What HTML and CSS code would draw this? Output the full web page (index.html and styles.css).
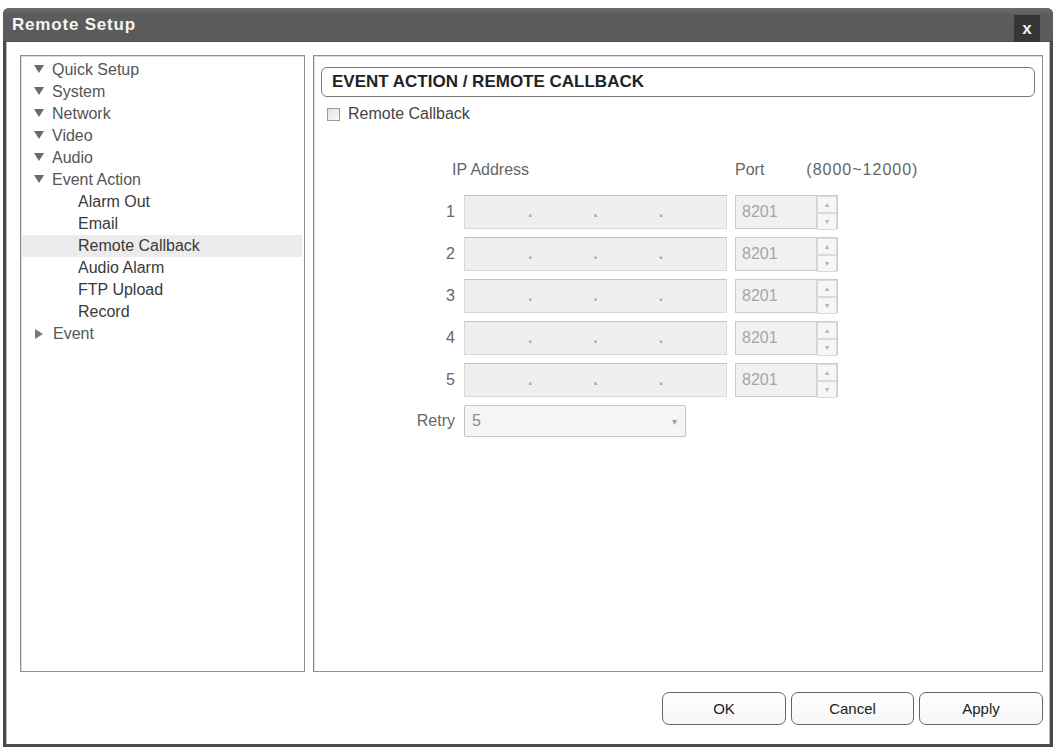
FILE: index.html
```html
<!DOCTYPE html>
<html lang="en">
<head>
    <meta charset="UTF-8">
    <title>Remote Setup</title>
    <link rel="stylesheet" href="styles.css">
</head>
<body>
    <div class="dialog">
        <div class="titlebar">
            <span class="title">Remote Setup</span>
            <button class="close-btn">x</button>
        </div>

        <div class="dialog-body">
            <div class="panels">
                <ul class="tree">
                    <li class="node open">Quick Setup</li>
                    <li class="node open">System</li>
                    <li class="node open">Network</li>
                    <li class="node open">Video</li>
                    <li class="node open">Audio</li>
                    <li class="node open">Event Action</li>
                    <li class="leaf">Alarm Out</li>
                    <li class="leaf">Email</li>
                    <li class="leaf selected">Remote Callback</li>
                    <li class="leaf">Audio Alarm</li>
                    <li class="leaf">FTP Upload</li>
                    <li class="leaf">Record</li>
                    <li class="node closed">Event</li>
                </ul>

                <div class="content">
                    <div class="section-title">EVENT ACTION / REMOTE CALLBACK</div>

                    <label class="check-row">
                        <span class="check-box"></span>
                        Remote Callback
                    </label>

                    <div class="callback-grid">
                        <span></span>
                        <span class="col-head ip-head">IP Address</span>
                        <span class="col-head">Port<span class="range">(8000~12000)</span></span>

                        <span class="row-label">1</span>
                        <div class="ip-field"><span></span><i>.</i><span></span><i>.</i><span></span><i>.</i><span></span></div>
                        <div class="port-field"><span class="port-value">8201</span><span class="spinner"><b>&#9652;</b><b>&#9662;</b></span></div>

                        <span class="row-label">2</span>
                        <div class="ip-field"><span></span><i>.</i><span></span><i>.</i><span></span><i>.</i><span></span></div>
                        <div class="port-field"><span class="port-value">8201</span><span class="spinner"><b>&#9652;</b><b>&#9662;</b></span></div>

                        <span class="row-label">3</span>
                        <div class="ip-field"><span></span><i>.</i><span></span><i>.</i><span></span><i>.</i><span></span></div>
                        <div class="port-field"><span class="port-value">8201</span><span class="spinner"><b>&#9652;</b><b>&#9662;</b></span></div>

                        <span class="row-label">4</span>
                        <div class="ip-field"><span></span><i>.</i><span></span><i>.</i><span></span><i>.</i><span></span></div>
                        <div class="port-field"><span class="port-value">8201</span><span class="spinner"><b>&#9652;</b><b>&#9662;</b></span></div>

                        <span class="row-label">5</span>
                        <div class="ip-field"><span></span><i>.</i><span></span><i>.</i><span></span><i>.</i><span></span></div>
                        <div class="port-field"><span class="port-value">8201</span><span class="spinner"><b>&#9652;</b><b>&#9662;</b></span></div>

                        <span class="row-label">Retry</span>
                        <div class="select-box"><span>5</span><span class="caret">&#9662;</span></div>
                    </div>
                </div>
            </div>

            <div class="actions">
                <button class="dlg-btn">OK</button>
                <button class="dlg-btn">Cancel</button>
                <button class="dlg-btn">Apply</button>
            </div>
        </div>
    </div>
</body>
</html>
```

FILE: styles.css
```css
body {
    margin: 0;
    padding: 0;
    background-color: #fff;
    font-family: 'Liberation Sans', Arial, sans-serif;
    color: #444;
}

.dialog {
    margin: 8px 0 0 3px;
    width: 1050px;
    height: 739px;
    box-sizing: border-box;
    border: 3px solid #4a4a4a;
    border-top: none;
    border-radius: 6px 6px 0 0;
    display: flex;
    flex-direction: column;
    background-color: #fff;
}

.titlebar {
    height: 34px;
    flex: none;
    display: flex;
    align-items: center;
    justify-content: space-between;
    padding-left: 6px;
    margin: 0 -3px;
    padding-left: 9px;
    border-radius: 6px 6px 0 0;
    background: linear-gradient(#6c6c6c, #5c5c5c 20%, #5a5a5a);
    border-bottom: 1px solid #4a4a4a;
    box-sizing: border-box;
}

.title {
    color: #f4f4f4;
    font-size: 17px;
    font-weight: bold;
    letter-spacing: 0.8px;
}

.close-btn {
    align-self: flex-end;
    width: 26px;
    height: 27px;
    margin-right: 13px;
    margin-bottom: -1px;
    padding: 0;
    border: none;
    background-color: #363636;
    color: #f0f0f0;
    font-family: 'Liberation Sans', Arial, sans-serif;
    font-size: 17px;
    font-weight: bold;
    line-height: 25px;
}

.dialog-body {
    flex: 1;
    display: flex;
    flex-direction: column;
    padding: 13px 7px 0 14px;
    box-shadow: inset 1px 0 0 #b8b8b8, inset -1px 0 0 #b8b8b8;
}

.panels {
    height: 617px;
    display: flex;
    gap: 8px;
}

/* left navigation tree */
.tree {
    width: 285px;
    margin: 0;
    padding: 3px 0 0;
    list-style: none;
    box-sizing: border-box;
    border: 1px solid #8e8e8e;
    box-shadow: inset 1px 1px 0 #dcdcdc;
    font-size: 16px;
}

.tree li {
    height: 22px;
    line-height: 22px;
    margin: 0 2px 0 1px;
    white-space: nowrap;
}

.tree .node {
    padding-left: 12px;
    color: #555;
}

.tree .node::before {
    content: '';
    display: inline-block;
    width: 0;
    height: 0;
    margin-right: 8px;
    vertical-align: 2px;
}

.tree .open::before {
    border-left: 5px solid transparent;
    border-right: 5px solid transparent;
    border-top: 8px solid #6a6a6a;
}

.tree .closed::before {
    margin-left: 1px;
    margin-right: 10px;
    vertical-align: 0;
    border-top: 5px solid transparent;
    border-bottom: 5px solid transparent;
    border-left: 8px solid #7a7a7a;
}

.tree .leaf {
    padding-left: 56px;
    color: #3a3a3a;
}

.tree .selected {
    background-color: #ececec;
}

/* right content area */
.content {
    flex: 1;
    box-sizing: border-box;
    border: 1px solid #8e8e8e;
    box-shadow: inset 1px 1px 0 #dcdcdc;
    padding: 11px 7px 0 7px;
}

.section-title {
    height: 30px;
    box-sizing: border-box;
    border: 1px solid #7a7a7a;
    border-radius: 6px;
    padding-left: 10px;
    line-height: 28px;
    font-size: 17px;
    font-weight: bold;
    color: #222;
}

.check-row {
    display: flex;
    align-items: center;
    height: 16px;
    margin-top: 9px;
    font-size: 16px;
    color: #444;
}

.check-box {
    width: 11px;
    height: 11px;
    margin: 0 8px 0 6px;
    border: 1px solid #9a9a9a;
    background: linear-gradient(135deg, #e2e2e2, #fafafa);
}

.callback-grid {
    display: grid;
    grid-template-columns: 61px 263px 103px;
    grid-template-rows: 28px repeat(5, 34px) 32px;
    column-gap: 8px;
    row-gap: 8px;
    margin: 37px 0 0 74px;
    font-size: 16px;
}

.col-head {
    line-height: 22px;
    color: #666;
    white-space: nowrap;
}

.ip-head {
    margin-left: -12px;
}

.range {
    margin-left: 42px;
    letter-spacing: 1px;
}

.row-label {
    text-align: right;
    padding-right: 1px;
    line-height: 34px;
    color: #666;
}

.ip-field {
    display: flex;
    align-items: center;
    box-sizing: border-box;
    border: 1px solid #d8d8d8;
    border-top-color: #c4c4c4;
    background-color: #efefef;
    padding: 0 2px;
}

.ip-field span {
    flex: 1;
}

.ip-field i {
    font-style: normal;
    font-weight: bold;
    color: #a8a8a8;
    line-height: 1;
}

.port-field {
    display: flex;
    box-sizing: border-box;
    border: 1px solid #cbcbcb;
    background-color: #f1f1f1;
}

.port-value {
    flex: 1;
    padding-left: 6px;
    line-height: 32px;
    color: #a6a6a6;
}

.spinner {
    width: 20px;
    display: flex;
    flex-direction: column;
    border-left: 1px solid #d4d4d4;
}

.spinner b {
    flex: 1;
    font-weight: normal;
    font-size: 8px;
    line-height: 15px;
    text-align: center;
    color: #b0b0b0;
    border: 1px solid #dadada;
    background-color: #f6f6f6;
}

.callback-grid .row-label:last-of-type {
    line-height: 32px;
}

.select-box {
    width: 222px;
    display: flex;
    align-items: center;
    justify-content: space-between;
    box-sizing: border-box;
    border: 1px solid #c6c6c6;
    border-radius: 2px;
    background-color: #f5f5f5;
    padding: 0 8px 0 7px;
    color: #8a8a8a;
}

.caret {
    font-size: 10px;
    color: #a0a0a0;
}

/* bottom buttons */
.actions {
    display: flex;
    justify-content: flex-end;
    gap: 5px;
    margin-top: 20px;
    padding-right: 0;
}

.dlg-btn {
    width: 124px;
    height: 33px;
    padding: 0;
    border: 1px solid #666;
    border-radius: 7px;
    background: linear-gradient(#fff, #f6f6f6);
    font-family: 'Liberation Sans', Arial, sans-serif;
    font-size: 15px;
    color: #222;
}

.dlg-btn:nth-child(2) {
    width: 123px;
}
```
